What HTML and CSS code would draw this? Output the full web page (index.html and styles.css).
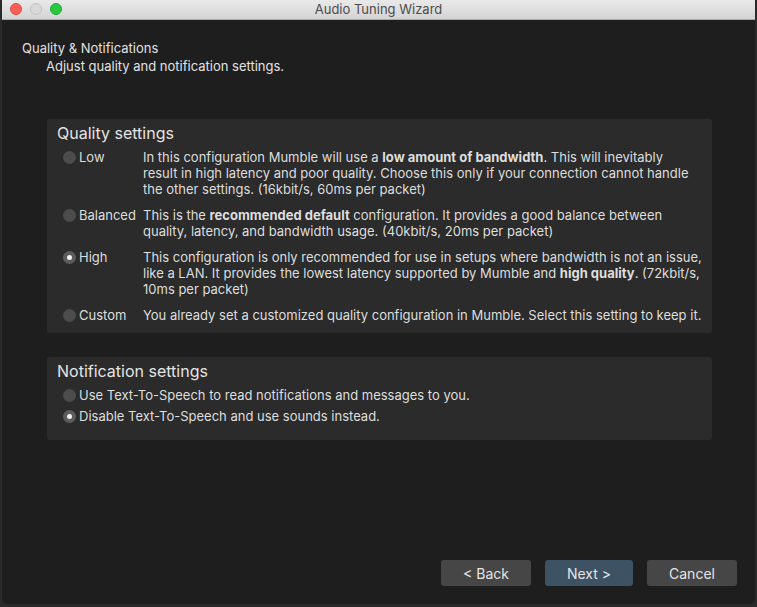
FILE: index.html
```html
<!DOCTYPE html>
<html>
<head>
<meta charset="utf-8">
<link rel="stylesheet" href="styles.css">
</head>
<body>
<div class="window">
  <div class="titlebar">
    <div class="lights">
      <span class="light red"></span>
      <span class="light gray"></span>
      <span class="light green"></span>
    </div>
    <div class="title">Audio Tuning Wizard</div>
  </div>
  <div class="content">
    <div class="heading">Quality &amp; Notifications</div>
    <div class="subheading">Adjust quality and notification settings.</div>

    <div class="group quality">
      <div class="group-title">Quality settings</div>
      <div class="qgrid">
        <div class="opt"><span class="radio"></span><span>Low</span></div>
        <div class="desc">In this configuration Mumble will use a <b>low amount of bandwidth</b>. This will inevitably<br>result in high latency and poor quality. Choose this only if your connection cannot handle<br>the other settings. (16kbit/s, 60ms per packet)</div>
        <div class="opt"><span class="radio"></span><span>Balanced</span></div>
        <div class="desc">This is the <b>recommended default</b> configuration. It provides a good balance between<br>quality, latency, and bandwidth usage. (40kbit/s, 20ms per packet)</div>
        <div class="opt"><span class="radio checked"></span><span>High</span></div>
        <div class="desc">This configuration is only recommended for use in setups where bandwidth is not an issue,<br>like a LAN. It provides the lowest latency supported by Mumble and <b>high quality</b>. (72kbit/s,<br>10ms per packet)</div>
        <div class="opt"><span class="radio"></span><span>Custom</span></div>
        <div class="desc">You already set a customized quality configuration in Mumble. Select this setting to keep it.</div>
      </div>
    </div>

    <div class="group notify">
      <div class="group-title">Notification settings</div>
      <div class="nlist">
        <div class="opt"><span class="radio"></span><span>Use Text-To-Speech to read notifications and messages to you.</span></div>
        <div class="opt"><span class="radio checked"></span><span>Disable Text-To-Speech and use sounds instead.</span></div>
      </div>
    </div>

    <div class="spacer"></div>
    <div class="buttons">
      <button class="btn">&lt; Back</button>
      <button class="btn primary">Next &gt;</button>
      <button class="btn">Cancel</button>
    </div>
  </div>
</div>
</body>
</html>
```
FILE: styles.css
```css
* { box-sizing: border-box; }
html, body {
  margin: 0;
  padding: 0;
  width: 757px;
  height: 607px;
  overflow: hidden;
  background: #2a2a2a;
  font-family: Inter, "Open Sans", "Liberation Sans", sans-serif;
}
.window {
  margin-left: 2px;
  width: 753px;
  height: 604px;
  background: #1e1e1e;
  border-radius: 0 0 5px 5px;
  display: flex;
  flex-direction: column;
  overflow: hidden;
}
.titlebar {
  height: 20px;
  flex: none;
  background: linear-gradient(#e9e9e9, #d4d4d4);
  border-bottom: 1px solid #a9a9a9;
  position: relative;
  display: flex;
  align-items: center;
  justify-content: center;
}
.lights {
  position: absolute;
  left: 8px;
  top: 3px;
  display: flex;
  gap: 8px;
}
.light {
  width: 12px;
  height: 12px;
  border-radius: 50%;
  display: block;
}
.light.red { background: #fc5f57; border: 0.5px solid #de4a43; }
.light.gray { background: #d8d8d8; border: 0.5px solid #c4c4c4; }
.light.green { background: #2ac940; border: 0.5px solid #1eaa31; }
.title {
  font-size: 13px;
  color: #4c4c4c;
  line-height: 19px;
}
.content {
  flex: 1;
  display: flex;
  flex-direction: column;
  padding: 20px 18px 18px 20px;
  color: #dedede;
  font-size: 13px;
  line-height: 16px;
}
.heading {
  font-size: 13px;
  color: #e2e2e2;
}
.subheading {
  font-size: 13px;
  color: #e2e2e2;
  margin-top: 2px;
  padding-left: 24px;
}
.group {
  margin-left: 25px;
  width: 665px;
  background: #2b2b2b;
  border-radius: 3px;
  padding: 4px 6px 10px 10px;
}
.quality { margin-top: 45px; }
.notify { margin-top: 24px; padding-bottom: 16px; }
.group-title {
  font-size: 16px;
  line-height: 20px;
  color: #e4e4e4;
  margin-bottom: 6px;
}
.qgrid {
  display: grid;
  grid-template-columns: 80px 1fr;
  row-gap: 10px;
  padding-left: 6px;
}
.opt {
  display: flex;
  align-items: flex-start;
  gap: 3px;
  white-space: nowrap;
}
.desc { white-space: nowrap; }
.desc b { font-weight: 700; }
.radio {
  width: 13px;
  height: 13px;
  border-radius: 50%;
  background: #4c4c4c;
  margin-top: 1.5px;
  flex: none;
  display: flex;
  align-items: center;
  justify-content: center;
}
.radio.checked { background: #5c5c5c; }
.radio.checked::after {
  content: "";
  width: 5px;
  height: 5px;
  border-radius: 50%;
  background: #f2f2f2;
}
.nlist {
  display: flex;
  flex-direction: column;
  gap: 5px;
  padding-left: 6px;
}
.spacer { flex: 1; }
.buttons {
  display: flex;
  justify-content: flex-end;
  gap: 14px;
}
.btn {
  width: 90px;
  height: 26px;
  border: none;
  border-radius: 3px;
  background: #464646;
  color: #e4e4e4;
  font-family: inherit;
  font-size: 14px;
  padding: 0;
}
.btn.primary { width: 88px; background: #3d5263; }
```
